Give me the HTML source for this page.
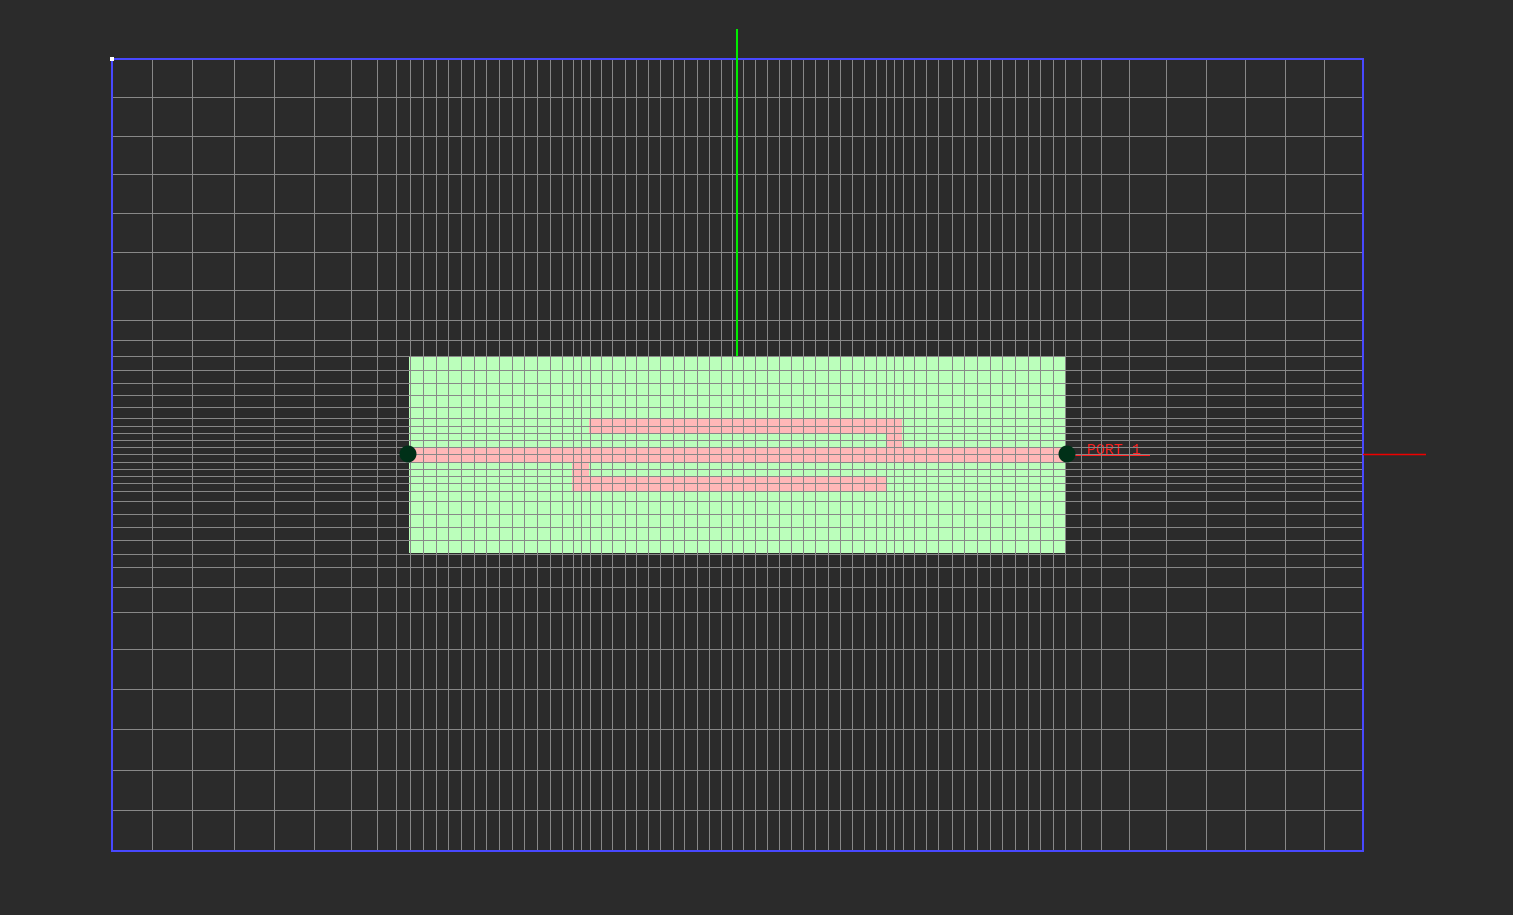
<!DOCTYPE html>
<html><head><style>
html,body{margin:0;padding:0;background:#2b2b2b;width:1513px;height:915px;overflow:hidden}
svg{display:block}
</style></head><body>
<svg width="1513" height="915" xmlns="http://www.w3.org/2000/svg">
<rect width="1513" height="915" fill="#2b2b2b"/>
<rect x="409" y="357" width="656" height="196" fill="#bbffbb"/>
<g fill="#ffb8b8">
<rect x="409" y="447" width="656" height="15"/>
<rect x="589" y="418" width="313" height="15"/>
<rect x="886" y="433" width="16" height="14"/>
<rect x="572" y="476" width="314" height="15"/>
<rect x="572" y="462" width="17" height="14"/>
</g>
<text x="1087" y="454" font-family="Liberation Mono, monospace" font-size="15" fill="#ff2020">PORT_1</text>
<line x1="1075" y1="455.5" x2="1150" y2="455.5" stroke="#ff2020" stroke-width="1"/>
<g id="v" stroke="#888888" stroke-width="1" fill="none"></g>
<g id="h" stroke="#888888" stroke-width="1" fill="none"></g>
<rect x="112" y="59" width="1251" height="792" fill="none" stroke="#4848ff" stroke-width="2"/>
<rect x="110" y="57" width="4" height="4" fill="#fff"/>
<line x1="737" y1="29" x2="737" y2="356" stroke="#00ee00" stroke-width="2"/>
<line x1="1363" y1="454.5" x2="1426" y2="454.5" stroke="#ee0000" stroke-width="1.5"/>
<circle cx="408" cy="454" r="8.5" fill="#003018"/>
<circle cx="1067" cy="454" r="8.5" fill="#003018"/>
</svg>
<script>
var xs=[152,192,234,274,314,351,377,396,410,423,436,448,461,474,486,499,512,524,537,550,562,573,581,590,601,612,625,636,648,660,673,684,697,709,721,732,743,755,767,779,791,803,815,828,840,852,864,876,886,894,903,914,926,938,952,964,977,990,1002,1015,1028,1040,1053,1065,1081,1101,1129,1166,1206,1245,1285,1324];
var ys=[97,136,174,213,252,290,320,340,356,370,383,395,407,418,426,433,440,447,454,462,469,476,483,491,501,514,527,540,554,567,587,612,649,689,729,770,810];
var d='';
xs.forEach(function(x){d+='M'+(x+0.5)+' 59V851';});
var p=document.createElementNS('http://www.w3.org/2000/svg','path');p.setAttribute('d',d);document.getElementById('v').appendChild(p);
d='';
ys.forEach(function(y){d+='M111 '+(y+0.5)+'H1363';});
p=document.createElementNS('http://www.w3.org/2000/svg','path');p.setAttribute('d',d);document.getElementById('h').appendChild(p);
</script>
</body></html>
